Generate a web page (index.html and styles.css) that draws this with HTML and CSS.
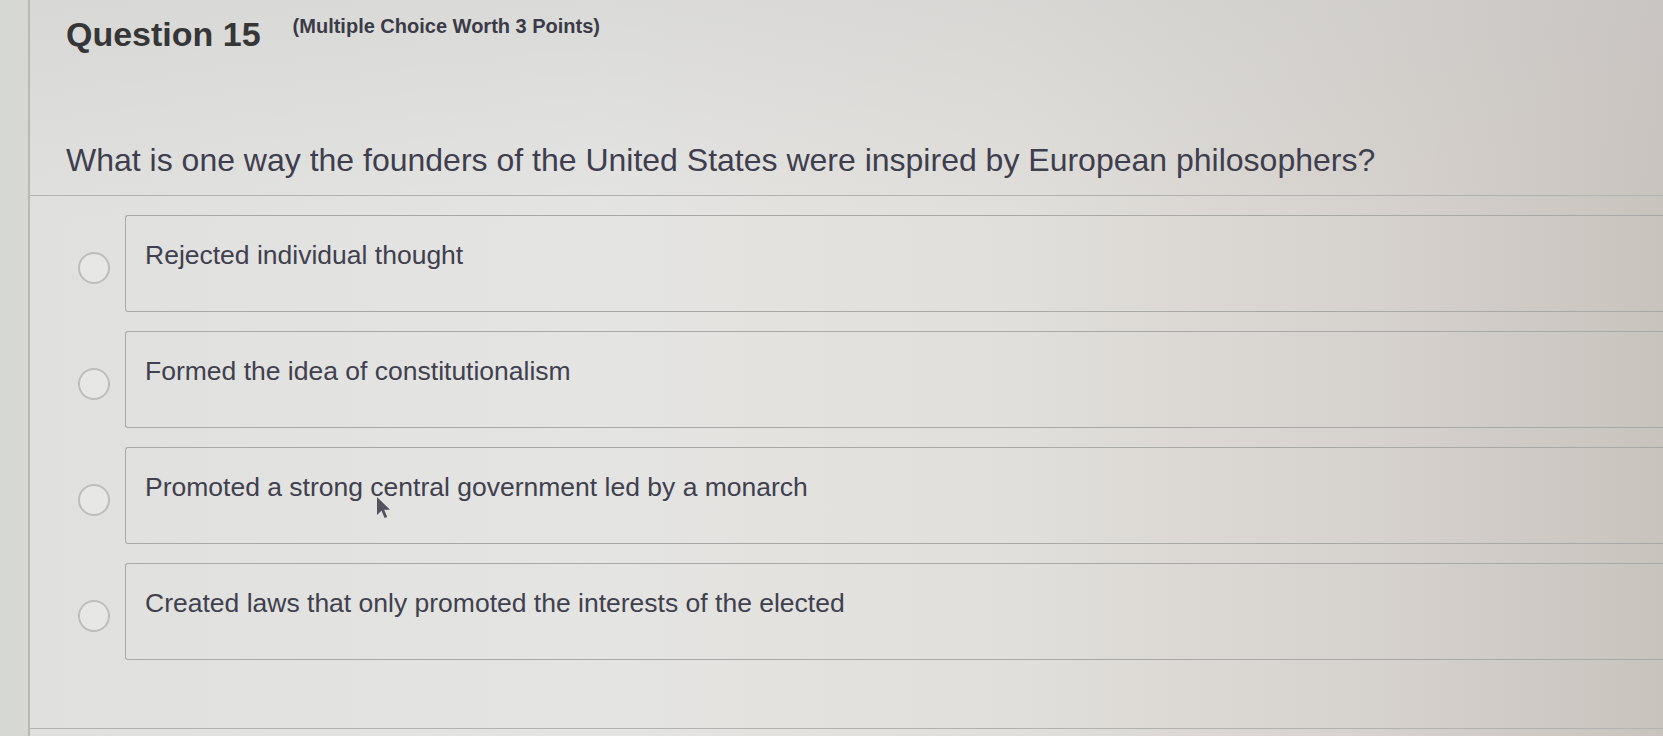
FILE: index.html
```html
<!DOCTYPE html>
<html lang="en">

<head>
    <meta charset="utf-8">
    <meta name="viewport" content="width=device-width, initial-scale=1.0">
    <title>Question 15</title>
    <link rel="stylesheet" href="styles.css">
</head>

<body>
    <div class="page">
        <header class="q_head">
            <h1>Question 15</h1>
            <span class="worth">(Multiple Choice Worth 3 Points)</span>
        </header>

        <p class="q_text">What is one way the founders of the United States were inspired by European philosophers?</p>

        <ul class="options">
            <li class="option">
                <span class="radio"></span>
                <div class="choice">Rejected individual thought</div>
            </li>
            <li class="option">
                <span class="radio"></span>
                <div class="choice">Formed the idea of constitutionalism</div>
            </li>
            <li class="option">
                <span class="radio"></span>
                <div class="choice">Promoted a strong central government led by a monarch
                    <svg class="cursor" width="16" height="26" viewBox="0 0 16 26">
                        <path d="M1 1 L1 19 L5.5 14.8 L8.6 22 L11.2 20.9 L8.2 13.8 L14 13.8 Z" />
                    </svg>
                </div>
            </li>
            <li class="option">
                <span class="radio"></span>
                <div class="choice">Created laws that only promoted the interests of the elected</div>
            </li>
        </ul>

        <div class="foot_line"></div>
    </div>
</body>

</html>
```

FILE: styles.css
```css
html,
body {
    height: 100%;
}

body {
    margin: 0;
    overflow: hidden;
    font-family: "Liberation Sans", Arial, sans-serif;
    background-color: #d6d8d3;
}

.page {
    min-height: 736px;
    margin-left: 28px;
    border-left: 2px solid #b8b8b5;
    background: linear-gradient(180deg, rgba(200, 200, 200, 0.35) 0%, rgba(200, 200, 200, 0) 30%),
        linear-gradient(90deg, #e0e0de 0%, #e4e4e2 35%, #e1dfdb 60%, #d6d2cd 82%, #c9c3be 100%);
}

.q_head {
    display: flex;
    align-items: flex-start;
    gap: 32px;
    padding: 15px 0 0 36px;
}

h1 {
    margin: 0;
    font-size: 34px;
    line-height: 39px;
    font-weight: bold;
    color: #363636;
}

.worth {
    font-size: 20px;
    line-height: 23px;
    font-weight: bold;
    color: #3b3b48;
}

.q_text {
    margin: 88px 0 0 0;
    padding: 0 0 16px 36px;
    font-size: 32px;
    line-height: 37px;
    color: #3e3e4e;
    border-bottom: 1px solid #b2b2b0;
}

.options {
    list-style: none;
    margin: 19px 0 0 0;
    padding: 0 0 0 48px;
    display: flex;
    flex-direction: column;
    gap: 19px;
}

.option {
    display: flex;
    align-items: center;
    gap: 15px;
}

.radio {
    flex: none;
    width: 28px;
    height: 28px;
    margin-top: 8px;
    border: 2px solid #bdbdbb;
    border-radius: 50%;
    background-color: #e7e7e5;
}

.choice {
    position: relative;
    flex: 1;
    height: 97px;
    box-sizing: border-box;
    padding: 24px 0 0 19px;
    border: 1px solid #a9a9a7;
    border-right: none;
    border-radius: 3px 0 0 3px;
    font-size: 26.5px;
    line-height: 30px;
    color: #40404e;
}

.cursor {
    position: absolute;
    left: 250px;
    top: 48px;
}

.cursor path {
    fill: #3a3946;
    opacity: 0.85;
}

.foot_line {
    margin-top: 68px;
    border-top: 1px solid #b2b2b0;
}
```
